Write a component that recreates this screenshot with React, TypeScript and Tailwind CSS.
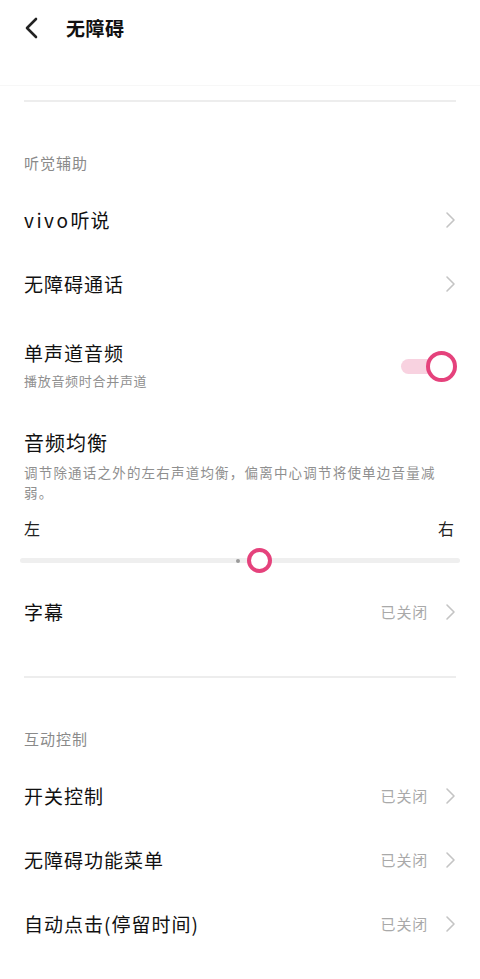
const font = { fontFamily: '"Noto Sans CJK SC", "Noto Sans", sans-serif' };

function Chevron() {
  return (
    <svg width="12" height="18" viewBox="0 0 12 18" className="shrink-0">
      <polyline points="2,2 9,9 2,16" fill="none" stroke="#c4c4c4" strokeWidth="1.6" strokeLinejoin="round" strokeLinecap="round" />
    </svg>
  );
}

function LinkRow({ label, value }: { label: React.ReactNode; value?: string }) {
  return (
    <div className="h-[64px] pl-6 pr-[23px] flex items-center justify-between">
      <span className="text-[19px] tracking-[1px] text-[#111]">{label}</span>
      <div className="flex items-center gap-[17px]">
        {value && <span className="text-[15px] tracking-[0.8px] text-[#a9a9a9]">{value}</span>}
        <Chevron />
      </div>
    </div>
  );
}

function SectionLabel({ children }: { children: string }) {
  return (
    <div className="h-[86px] px-6 pt-[51px]">
      <p className="text-[15px] leading-[20px] tracking-[1px] text-[#8a8a8a]">{children}</p>
    </div>
  );
}

export default function App() {
  return (
    <div className="w-[480px] h-[979px] bg-white overflow-hidden" style={font}>
      {/* header */}
      <div className="h-[86px] border-b border-[#f7f7f7]">
        <div className="h-[56px] flex items-center">
          <svg width="20" height="24" viewBox="0 0 20 24" className="ml-[22px]">
            <polyline points="14,3 5,12 14,21" fill="none" stroke="#222" strokeWidth="2.6" strokeLinecap="round" strokeLinejoin="round" />
          </svg>
          <h1 className="ml-[24px] text-[19px] font-bold tracking-[0.5px] text-[#111]">无障碍</h1>
        </div>
      </div>
      <div className="mx-6 mt-[14px] h-[2px] bg-[#ededed]" />

      <SectionLabel>听觉辅助</SectionLabel>
      <LinkRow label={<><span className="tracking-[2.5px]">vivo</span>听说</>} />
      <LinkRow label="无障碍通话" />

      {/* mono audio */}
      <div className="px-6 pt-[23px] flex items-center justify-between">
        <div>
          <p className="text-[19px] leading-[28px] tracking-[1px] text-[#111]">单声道音频</p>
          <p className="mt-[4px] text-[13px] leading-[20px] tracking-[0.7px] text-[#8f8f8f]">播放音频时合并声道</p>
        </div>
        <div className="relative w-[56px] h-[32px] mr-[-1px] mt-[3px]">
          <div className="absolute left-0 top-[8px] w-[44px] h-[15px] rounded-full bg-[#f8d2e0]" />
          <div className="absolute right-0 top-0 w-[31px] h-[31px] rounded-full bg-white border-[4px] border-[#e5427c]" />
        </div>
      </div>

      {/* balance */}
      <div className="px-6 pt-[38px]">
        <p className="text-[20px] leading-[28px] tracking-[1px] text-[#111]">音频均衡</p>
        <p className="mt-[5px] text-[13.5px] leading-[20px] tracking-[1.2px] text-[#8f8f8f]">
          调节除通话之外的左右声道均衡，偏离中心调节将使单边音量减弱。
        </p>
        <div className="mt-[16px] flex justify-between text-[16px] leading-[20px] text-[#222]">
          <span>左</span>
          <span className="mr-[2px]">右</span>
        </div>
      </div>
      <div className="relative mx-5 mt-[10px] h-[26px]">
        <div className="absolute left-0 right-0 top-[10px] h-[5px] rounded-full bg-[#efefef]" />
        <div className="absolute left-[216px] top-[11px] w-[4px] h-[4px] rounded-full bg-[#9a9a9a]" />
        <div className="absolute left-[227px] top-0 w-[25px] h-[25px] rounded-full bg-white border-[4px] border-[#e5427c]" />
      </div>
      <div className="mt-[6px]">
        <LinkRow label="字幕" value="已关闭" />
      </div>

      <div className="mx-6 mt-[32px] h-[2px] bg-[#ededed]" />

      <SectionLabel>互动控制</SectionLabel>
      <LinkRow label="开关控制" value="已关闭" />
      <LinkRow label="无障碍功能菜单" value="已关闭" />
      <LinkRow label="自动点击(停留时间)" value="已关闭" />
    </div>
  );
}
